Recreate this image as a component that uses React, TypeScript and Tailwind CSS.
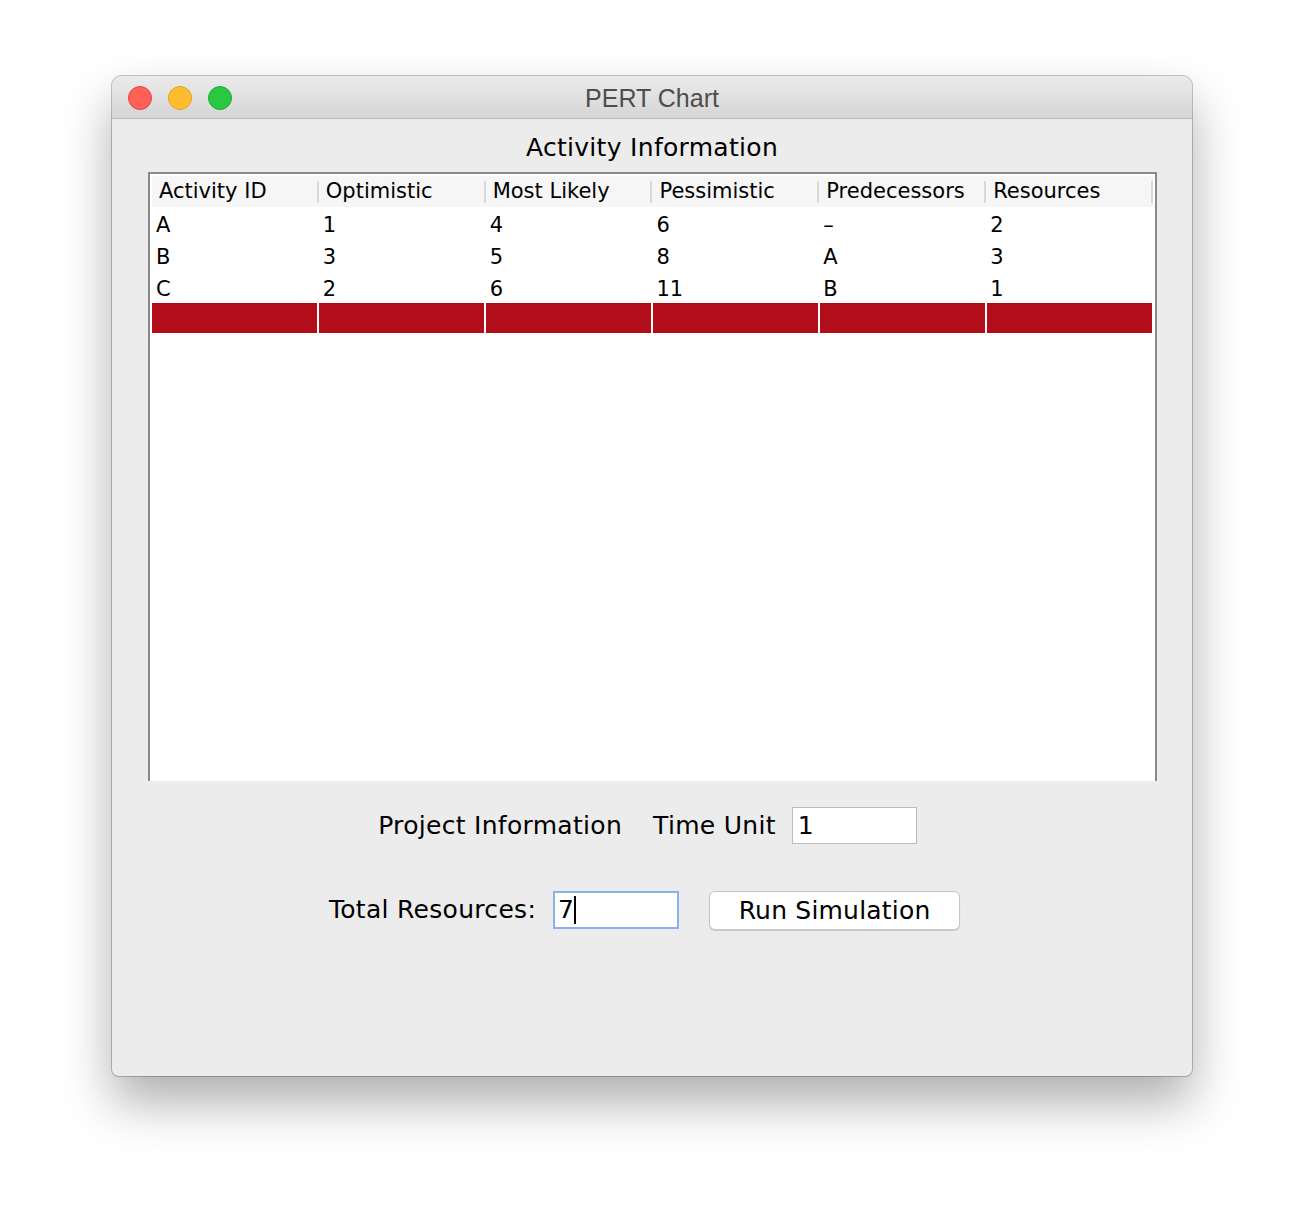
const columns = ["Activity ID", "Optimistic", "Most Likely", "Pessimistic", "Predecessors", "Resources"];

const rows = [
  ["A", "1", "4", "6", "–", "2"],
  ["B", "3", "5", "8", "A", "3"],
  ["C", "2", "6", "11", "B", "1"],
];

function TrafficLights() {
  return (
    <div className="flex items-center gap-[16px] pl-[16px] pt-[1px]">
      <span className="h-[24px] w-[24px] rounded-full border border-[#e2463f] bg-[#fe5f57]" />
      <span className="h-[24px] w-[24px] rounded-full border border-[#e1a12a] bg-[#febc2e]" />
      <span className="h-[24px] w-[24px] rounded-full border border-[#1fac2f] bg-[#28c840]" />
    </div>
  );
}

export default function App() {
  return (
    <div className="min-h-screen bg-white pl-[112px] pt-[76px] font-['DejaVu_Sans',sans-serif]">
      {/* Window */}
      <div className="flex h-[1000px] w-[1080px] flex-col overflow-hidden rounded-t-[10px] rounded-b-[7px] bg-[#ececec] shadow-[0_0_0_1px_rgba(0,0,0,0.22),0_26px_50px_rgba(0,0,0,0.32)]">
        {/* Title bar */}
        <div className="relative flex h-[43px] shrink-0 items-center border-b border-[#b9b9b9] bg-gradient-to-b from-[#ebebeb] to-[#d5d5d5]">
          <TrafficLights />
          <div className="absolute inset-0 flex items-center justify-center pt-[4px] font-['Liberation_Sans',sans-serif] text-[25px] text-[#4d4d4d]">
            PERT Chart
          </div>
        </div>

        {/* Content */}
        <div className="flex flex-1 flex-col">
          <div className="flex h-[53px] items-center justify-center pt-[4px] text-[25px] tracking-[0.3px] text-black">
            Activity Information
          </div>

          {/* Table */}
          <div className="ml-[36px] h-[609px] w-[1009px] border-x-2 border-t-2 border-[#8a8a8a] bg-white px-[2px] pt-[2px]">
            <div className="grid h-[31px] grid-cols-6 bg-[#f6f6f6] text-[21px] text-black">
              {columns.map((c) => (
                <div key={c} className="flex items-center justify-between pl-[7px]">
                  <span>{c}</span>
                  <span className="h-[22px] w-[2px] bg-[#d9d9d9]" />
                </div>
              ))}
            </div>
            {rows.map((r, i) => (
              <div key={i} className="grid h-[32px] grid-cols-6 text-[21px] leading-[22px] text-black">
                {r.map((v, j) => (
                  <div key={j} className="pl-[4px] pt-[7px]">
                    {v}
                  </div>
                ))}
              </div>
            ))}
            <div className="grid h-[30px] grid-cols-6 gap-[2px] pr-[1px]">
              {columns.map((c) => (
                <div key={c} className="bg-[#b30d1b]" />
              ))}
            </div>
          </div>

          {/* Project info */}
          <div className="mt-[26px] flex h-[37px] items-center justify-center pr-[9px] text-[25px] tracking-[0.3px] text-black">
            <span>Project Information</span>
            <span className="ml-[31px]">Time Unit</span>
            <div className="ml-[16px] flex h-[37px] w-[125px] items-center border border-[#bdbdbd] bg-white pl-[5px]">
              1
            </div>
          </div>

          <div className="mt-[46px] flex h-[40px] items-center justify-center pr-[15px] text-[25px] tracking-[0.3px] text-black">
            <span>Total Resources:</span>
            <div className="ml-[17px] flex h-[38px] w-[126px] items-center border-2 border-[#86b4ea] bg-white pl-[3px]">
              <span>7</span>
              <span className="h-[28px] w-[2px] bg-black" />
            </div>
            <button className="ml-[30px] h-[39px] w-[251px] rounded-[6px] border border-[#c6c6c6] bg-white text-[25px] tracking-[0.2px] text-black shadow-[0_1px_1px_rgba(0,0,0,0.15)]">
              Run Simulation
            </button>
          </div>
        </div>
      </div>
    </div>
  );
}
